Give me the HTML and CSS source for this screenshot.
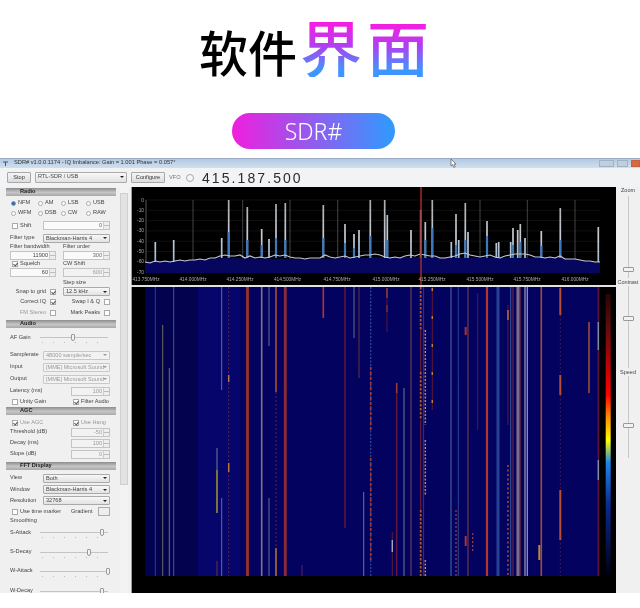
FILE: index.html
```html
<!DOCTYPE html>
<html lang="zh">
<head>
<meta charset="utf-8">
<title>软件界面</title>
<link rel="stylesheet" href="styles.css">
</head>
<body>
<header class="head">
  <h1 class="title"><span class="plain">软件</span><span class="grad">界面</span></h1>
  <div class="pill">SDR#</div>
</header>

<section class="window">
  <div class="titlebar">
    <svg class="appicon" viewBox="0 0 5 5"><path d="M0 1h5M2.500 1v4" stroke="#27618f" stroke-width="1"/></svg>
    <span class="wintitle">SDR# v1.0.0.1174 - IQ Imbalance: Gain = 1.001 Phase = 0.057°</span>
    <svg class="cursor" viewBox="0 0 7 9"><path d="M1 0v7l1.600-1.400 1.200 2.800 1.400-.6-1.200-2.600H6z" fill="#fff" stroke="#555" stroke-width=".7"/></svg>
    <div class="winbtns"><i class="wb wb1"></i><i class="wb wb2"></i><i class="wb wb3"></i></div>
  </div>
  <div class="toolbar">
    <button class="btn stop">Stop</button>
    <div class="select device">RTL-SDR / USB</div>
    <button class="btn configure">Configure</button>
    <span class="vfo">VFO</span>
    <span class="knob"></span>
    <span class="freq">415.187.500</span>
  </div>
  <div class="main">
    <aside class="side">
      <div class="panel">
        <div class="sec h8 mt1">Radio</div>
        <div class="rows">
          <div class="radios h10 mt2"><label><i class="rb on"></i>NFM</label><label><i class="rb"></i>AM</label><label><i class="rb"></i>LSB</label><label><i class="rb"></i>USB</label></div>
          <div class="radios h10"><label><i class="rb"></i>WFM</label><label><i class="rb"></i>DSB</label><label><i class="rb"></i>CW</label><label><i class="rb"></i>RAW</label></div>
          <div class="lc h15"><label class="chk"><i class="cb"></i>Shift</label><div class="num dim">0</div></div>
          <div class="lc h10"><span>Filter type</span><div class="select">Blackman-Harris 4</div></div>
          <div class="half h8"><span>Filter bandwidth</span><span>Filter order</span></div>
          <div class="half h9"><div class="num w46">11900</div><div class="num dim">300</div></div>
          <div class="half h8"><label class="chk"><i class="cb on"></i>Squelch</label><span>CW Shift</span></div>
          <div class="half h9"><div class="num w46">60</div><div class="num off">600</div></div>
          <div class="half h8 mt2"><span></span><span>Step size</span></div>
          <div class="half h9"><label class="chk rt">Snap to grid<i class="cb on"></i></label><div class="select">12.5 kHz</div></div>
          <div class="half h11"><label class="chk rt">Correct IQ<i class="cb on"></i></label><label class="chk rt wide">Swap I &amp; Q<i class="cb"></i></label></div>
          <div class="half h11"><label class="chk rt muted">FM Stereo<i class="cb"></i></label><label class="chk rt wide">Mark Peaks<i class="cb"></i></label></div>
        </div>
        <div class="sec h8 mt2">Audio</div>
        <div class="rows">
          <div class="sl h19"><span>AF Gain</span><div class="track"><i class="thumb" style="left:31px"></i></div></div>
          <div class="lc h12 mt2"><span>Samplerate</span><div class="select off">48000 sample/sec</div></div>
          <div class="lc h12"><span>Input</span><div class="select off">[MME] Microsoft Sound</div></div>
          <div class="lc h12"><span>Output</span><div class="select off">[MME] Microsoft Sound</div></div>
          <div class="lat h12"><span>Latency (ms)</span><div class="num off">100</div></div>
          <div class="lat h10"><label class="chk"><i class="cb"></i>Unity Gain</label><label class="chk"><i class="cb on"></i>Filter Audio</label></div>
        </div>
        <div class="sec h8">AGC</div>
        <div class="rows">
          <div class="lat h9 mt3 muted"><label class="chk"><i class="cb on"></i>Use AGC</label><label class="chk"><i class="cb on"></i>Use Hang</label></div>
          <div class="lat h10"><span>Threshold (dB)</span><div class="num off">-50</div></div>
          <div class="lat h12"><span>Decay (ms)</span><div class="num off">100</div></div>
          <div class="lat h10"><span>Slope (dB)</span><div class="num off">0</div></div>
        </div>
        <div class="sec h8 mt3">FFT Display</div>
        <div class="rows">
          <div class="lc h12 mt2"><span>View</span><div class="select">Both</div></div>
          <div class="lc h11"><span>Window</span><div class="select">Blackman-Harris 4</div></div>
          <div class="lc h11"><span>Resolution</span><div class="select">32768</div></div>
          <div class="lat h11"><label class="chk"><i class="cb"></i>Use time marker</label><div class="grad-row"><span>Gradient</span><i class="mini"></i></div></div>
          <div class="plainrow h7">Smoothing</div>
          <div class="sl h17"><span>S-Attack</span><div class="track"><i class="thumb" style="left:60px"></i></div></div>
          <div class="sl h22"><span>S-Decay</span><div class="track"><i class="thumb" style="left:47px"></i></div></div>
          <div class="sl h16"><span>W-Attack</span><div class="track"><i class="thumb" style="left:66px"></i></div></div>
          <div class="sl h24"><span>W-Decay</span><div class="track"><i class="thumb" style="left:60px"></i></div></div>
        </div>
      </div>
      <div class="scroll"><i class="scrollthumb"></i></div>
    </aside>

    <svg class="display" viewBox="131 187 485 406" preserveAspectRatio="none">
      <defs>
        <linearGradient id="spike" gradientUnits="userSpaceOnUse" x1="0" y1="200" x2="0" y2="262">
          <stop offset="0" stop-color="#a8acb0"/><stop offset=".6" stop-color="#c6ccd4"/><stop offset="1" stop-color="#9fb8d8"/>
        </linearGradient>
        <linearGradient id="scale" x1="0" y1="0" x2="0" y2="1">
          <stop offset="0" stop-color="#2a0505"/><stop offset=".12" stop-color="#600c0c"/><stop offset=".36" stop-color="#ff0000"/><stop offset=".43" stop-color="#ff8000"/><stop offset=".52" stop-color="#ffff00"/><stop offset=".6" stop-color="#1e86e8"/><stop offset=".75" stop-color="#0a2a90"/><stop offset="1" stop-color="#000010"/>
        </linearGradient>
      </defs>
      <rect x="131" y="187" width="485" height="406" fill="#000"/>
      <rect x="131" y="187" width="1" height="406" fill="#9a9a9a"/>

      <path d="M145 200H600M145 210.300H600M145 220.600H600M145 230.900H600M145 241.200H600M145 251.500H600M145 261.800H600" stroke="#181818" stroke-width=".7"/>
      <path d="M193 200V262M242.700 200V262M290 200V262M337.700 200V262M480 200V262M527.300 200V262M575 200V262" stroke="#444" stroke-width="1"/>
      <path d="M146 200V262" stroke="#555" stroke-width="1"/>
      <polygon fill="#06065e" points="145,262 180,261 220,258 300,259 400,257 500,258 560,258 600,263 600,273 145,273"/>

      <path fill="none" stroke="url(#spike)" stroke-width="1.700" d="M155.300 262V242M173.700 262V240M221.700 258V238M228.700 258V200M247.300 258V207M261.700 258V229M269 258V239M276 258V204M285.300 258V203M323.300 258V205M345 258V224M354 258V234M359 258V230M370.300 258V200M384.700 258V200M387.300 258V215M411 258V230M420.700 258V210M425.300 258V222M432.300 258V200M451.300 258V242M456 258V214M458.700 258V240M465.300 258V203M468 258V232M487 258V221M496.300 258V243M498.700 258V242M510.700 258V242M513 258V228M517.700 258V230M520.300 258V224M525 258V238M541.300 258V231M560.300 258V208M598.300 262V227"/>
      <path fill="none" stroke="#3f78bc" stroke-width="2.200" d="M228.700 258V232M247.300 258V240M261.700 258V245M276 258V238M285.300 258V240M323.300 258V238M345 258V243M354 258V248M370.300 258V236M387.300 258V240M425.300 258V240M432.300 258V228M456 258V245M465.300 258V240M487 258V236M513 258V245M520.300 258V242M541.300 258V246M560.300 258V240"/>
      <polyline fill="none" stroke="#c4c8d2" stroke-width="1.200" points="145,262 150,263 155,261 160,262 165,261 170,262 175,261 180,260 185,261 190,260 195,260 200,259 205,260 210,258 215,258 220,256 225,255 230,256 235,256 240,255 245,258 250,256 255,258 260,257 265,258 270,257 275,255 280,256 285,255 290,257 295,258 300,258 305,259 310,258 315,258 320,258 325,255 330,257 335,258 340,257 345,256 350,258 355,257 360,256 365,255 370,255 375,254 380,255 385,257 390,258 395,257 400,258 405,256 410,255 415,256 420,254 425,255 430,256 435,256 440,258 445,258 450,257 455,256 460,254 465,253 470,255 475,256 480,257 485,256 490,255 495,257 500,258 505,256 510,255 515,254 520,254 525,254 530,255 535,257 540,257 545,258 550,257 555,258 560,256 565,259 570,259 575,259 580,260 585,261 590,261 595,262 600,262"/>

      <path d="M421 187V285" stroke="#a12a2a" stroke-width="1.800" opacity=".85"/>

      <g class="axis">
        <text x="144" y="201.500" text-anchor="end">0</text><text x="144" y="211.800" text-anchor="end">-10</text><text x="144" y="222.100" text-anchor="end">-20</text><text x="144" y="232.400" text-anchor="end">-30</text><text x="144" y="242.700" text-anchor="end">-40</text><text x="144" y="253" text-anchor="end">-50</text><text x="144" y="263.300" text-anchor="end">-60</text><text x="144" y="273.600" text-anchor="end">-70</text>
        <text x="146" y="281" text-anchor="middle">413.750MHz</text><text x="193" y="281" text-anchor="middle">414.000MHz</text><text x="240" y="281" text-anchor="middle">414.250MHz</text><text x="287.500" y="281" text-anchor="middle">414.500MHz</text><text x="337" y="281" text-anchor="middle">414.750MHz</text><text x="386" y="281" text-anchor="middle">415.000MHz</text><text x="432" y="281" text-anchor="middle">415.250MHz</text><text x="480" y="281" text-anchor="middle">415.500MHz</text><text x="527" y="281" text-anchor="middle">415.750MHz</text><text x="575" y="281" text-anchor="middle">416.000MHz</text>
      </g>

      <rect x="131" y="285" width="485" height="2" fill="#e2e2e2"/>
      <rect x="145.300" y="287" width="454.700" height="289" fill="#03035f"/>
      <rect x="145.300" y="287" width="53" height="289" fill="#02024e"/>
      <rect x="198" y="287" width="42" height="289" fill="#05056c"/>

      <g fill="none" stroke-width="1" opacity=".85">
        <path stroke="#2b4d9c" d="M155.300 287V576M458.300 287V380"/>
        <path stroke="#7f7f64" d="M162.700 325V576"/>
        <path stroke="#8d8d4c" d="M169.300 368V576"/>
        <path stroke="#566a8e" d="M173.700 287V576"/>
        <path stroke="#76809a" d="M221.700 287V390M221.700 498V576M269 287V346M269 498V576M354 287V338"/>
        <path stroke="#8e8e9a" d="M217 448V470"/>
        <path stroke="#cdbc1f" stroke-width="1.400" d="M217 470V513"/>
        <path stroke="#7a3a3a" d="M217 561V576M359 287V378"/>
        <path stroke="#6d2a3e" stroke-dasharray="2 2" d="M228.700 287V576M276 392V548"/>
        <path stroke="#d88a30" stroke-width="1.500" d="M228.700 375V382M228.700 463V472M276 548V576"/>
        <path stroke="#b83a22" stroke-width="2.800" d="M247.500 287V576"/>
        <path stroke="#97868a" stroke-width="1.600" d="M261.700 287V576"/>
        <path stroke="#d0582a" stroke-width="1.600" d="M276 287V392"/>
        <path stroke="#a83232" stroke-width="2.800" d="M285.300 287V576"/>
        <path stroke="#d24020" stroke-width="1.600" d="M323.300 287V318"/>
        <path stroke="#781c34" stroke-width="1.400" d="M345 287V528M396.700 393V576"/>
        <path stroke="#3a5aa8" stroke-width="1.200" stroke-dasharray="2 1.500" d="M370.700 287V576"/>
        <path stroke="#c04428" stroke-width="1.600" stroke-dasharray="3 2" d="M370.700 367V430M370.700 458V560"/>
        <path stroke="#908878" d="M363.700 492V576"/>
        <path stroke="#6a2a60" d="M302 565V576"/>
        <path stroke="#b84a28" stroke-width="1.500" d="M387 288V298M387 305V312M396.700 383V393"/>
        <path stroke="#6a1c30" d="M387 298V332M432.300 287V410M477.700 293V430M508 305V425"/>
        <path stroke="#6d7888" stroke-width="1.200" d="M404 388V576"/>
        <path stroke="#7a4550" stroke-width="1.200" d="M411 287V576"/>
        <path stroke="#c8642c" stroke-width="1.800" stroke-dasharray="2.500 1.500" d="M420.700 287V330M420.700 372V420M420.700 510V576"/>
        <path stroke="#7a2034" stroke-width="1.200" d="M420.700 330V372M420.700 420V510M423.500 287V576"/>
        <path stroke="#d8a040" stroke-width="1.500" stroke-dasharray="2 1.500" d="M425.300 330V425M425.300 440V495M425.300 560V576"/>
        <path stroke="#d8923a" stroke-width="1.500" stroke-dasharray="3 25" d="M432.300 288V410"/>
        <path stroke="#4a6c9e" stroke-width="1.200" d="M451 287V576"/>
        <path stroke="#34509c" d="M458.300 380V576"/>
        <path stroke="#c24a3a" stroke-width="1.200" stroke-dasharray="2 2" d="M456 510V576M472.700 533V553"/>
        <path stroke="#7c4648" stroke-width="1.200" d="M468 287V576"/>
        <path stroke="#c83c2c" stroke-width="2" d="M465.700 536V546M465.700 327V335"/>
        <path stroke="#cc4222" stroke-width="2.200" d="M487 287V576"/>
        <path stroke="#2e4e9e" stroke-width="3" d="M498 287V576"/>
        <path stroke="#d0783c" stroke-width="1.600" d="M508 310V320"/>
        <path stroke="#c45a34" stroke-width="1.500" stroke-dasharray="2 2.500" d="M508 465V576"/>
        <path stroke="#3a5aa8" stroke-width="1.200" d="M510.700 287V576"/>
        <path stroke="#7a2a40" stroke-width="1.200" d="M513 287V576"/>
        <path stroke="#8f7f8e" stroke-width="3.200" d="M518 287V576"/>
        <path stroke="#bc3c34" d="M520 287V576"/>
        <path stroke="#b4bac4" stroke-width="1.200" d="M525 287V576M527.300 287V576"/>
        <path stroke="#c4582a" stroke-width="1.600" d="M541.300 287V576"/>
        <path stroke="#7a1e30" stroke-dasharray="1.500 2.500" d="M560.300 287V576"/>
        <path stroke="#d85c28" stroke-width="2" d="M560.300 288V315M560.300 375V395M560.300 490V540"/>
        <path stroke="#b45a34" stroke-width="1.600" d="M589 322V393"/>
        <path stroke="#7a1e30" stroke-width="1.200" d="M598.300 287V576"/>
        <path stroke="#9aa2ac" stroke-width="1.400" d="M598.300 322V350M598.300 460V480"/>
        <path stroke="#6a2438" d="M392.300 532V576"/>
        <path stroke="#c8c0d0" stroke-width="1.400" d="M392.300 540V552"/>
        <path stroke="#d8a038" stroke-width="2" d="M539.300 545V560"/>
      </g>
      <rect x="605.700" y="294" width="5" height="281" fill="url(#scale)"/>
    </svg>

    <aside class="rail">
      <div class="rail-label first">Zoom</div>
      <div class="vtrack t1"><i class="vthumb"></i></div>
      <div class="rail-label">Contrast</div>
      <div class="vtrack t2"><i class="vthumb"></i></div>
      <div class="rail-label">Speed</div>
      <div class="vtrack t3"><i class="vthumb"></i></div>
    </aside>
  </div>
</section>
</body>
</html>
```

FILE: styles.css
```css
* { box-sizing: border-box; }
html, body { margin: 0; padding: 0; background: #fff; }
body { width: 640px; height: 608px; overflow: hidden; font-family: "Noto Sans CJK SC", "Noto Sans", sans-serif; }

.head { height: 158px; padding-top: 9px; filter: blur(.3px); }
.title { margin: 0 0 0 199px; height: 68px; font-weight: 400; white-space: nowrap; display: flex; align-items: flex-end; line-height: 1; }
.plain { font-size: 49px; color: #000; padding-bottom: 2px; margin-right: 3px; font-weight: 500; }
.grad { font-size: 62px; font-weight: 500; letter-spacing: 5px; background: linear-gradient(180deg, #f51ee0 15%, #b13ff0 50%, #3f95ff 88%); -webkit-background-clip: text; background-clip: text; color: transparent; }
.pill { margin: 36px 0 0 232px; width: 163px; height: 36px; border-radius: 18px; background: linear-gradient(90deg, #f01fdd, #2f9bff); color: #fff; font: 300 23px/36px "Noto Sans", sans-serif; text-align: center; }

.window { height: 435px; width: 640px; display: flex; flex-direction: column; font: 5.600px/1 "Liberation Sans", sans-serif; color: #444; background: #f0f0f0; filter: blur(.6px); overflow: hidden; }

.titlebar { height: 10px; flex: none; display: flex; align-items: center; background: linear-gradient(180deg, #8d9fb6 0, #b5cbe2 15%, #cfdfee 100%); padding-left: 3px; position: relative; }
.appicon { width: 5px; height: 5px; margin-right: 6px; }
.wintitle { font-size: 5.700px; color: #333; }
.cursor { position: absolute; left: 450px; top: 1px; width: 7px; height: 9px; }
.winbtns { margin-left: auto; display: flex; gap: 3px; }
.wb { display: block; height: 7px; border: 1px solid #9fb2c6; background: #c0cfde; }
.wb1 { width: 15px; }
.wb2 { width: 11px; }
.wb3 { width: 9px; background: #d8693c; border-color: #c86040; }

.toolbar { height: 19px; flex: none; display: flex; align-items: center; background: #f1f3f4; padding-left: 7px; }
.btn { font: 5.600px/1 "Liberation Sans", sans-serif; color: #333; height: 11px; padding: 0; border: 1px solid #a8a8a8; border-radius: 1px; background: linear-gradient(#f6f6f6, #dcdcdc); }
.stop { width: 24px; }
.configure { width: 34px; margin-left: 4px; }
.device { width: 92px; height: 11px !important; margin-left: 4px; line-height: 9px; }
.vfo { margin-left: 4px; color: #777; width: 12px; }
.knob { width: 8px; height: 8px; border-radius: 50%; border: 1px solid #aaa; margin-left: 5px; background: #f6f6f6; }
.freq { margin-left: 8px; font: 400 14px/1 "Liberation Sans", sans-serif; letter-spacing: 2.080px; color: #2b2b2b; }

.main { flex: 1; display: flex; min-height: 0; }
.side { width: 131px; flex: none; display: flex; overflow: hidden; }
.panel { width: 120px; padding-left: 6px; flex: none; height: 416px; }
.sec { width: 110px; background: linear-gradient(180deg, #8d8d8d, #c6c6c6 55%, #a8a8a8); padding-left: 14px; font-weight: 700; color: #222; display: flex; align-items: center; }
.rows { padding-left: 4px; width: 104px; }
.rows > * { display: grid; align-items: center; width: 100px; }
.h7 { height: 7px; } .h8 { height: 8px; } .h9 { height: 9px; } .h10 { height: 10px; } .h11 { height: 11px; } .h12 { height: 12px; }
.h15 { height: 15px; } .h16 { height: 16px; } .h17 { height: 17px; } .h19 { height: 19px; } .h22 { height: 22px; } .h24 { height: 24px; }
.mt1 { margin-top: 1px; } .mt2 { margin-top: 2px; } .mt3 { margin-top: 3px; }
.radios { grid-template-columns: 27px 23px 25px 25px; }
.radios label { display: flex; align-items: center; gap: 2px; }
.lc { grid-template-columns: 33px 67px; }
.half { grid-template-columns: 53px 47px; }
.lat { grid-template-columns: 61px 39px; }
.sl { grid-template-columns: 30px 68px; }
.plainrow { display: block !important; line-height: 7px; }

.rb { width: 5px; height: 5px; border-radius: 50%; border: 1px solid #aaa; background: #fff; display: block; margin-left: 1px; flex: none; }
.rb.on { background: #2f6cae; border-color: #7f9fc0; }
.chk { display: flex; align-items: center; gap: 2px; }
.cb { width: 6px; height: 6px; border: 1px solid #aaa; background: #fff; display: block; flex: none; position: relative; margin-left: 2px; }
.cb.on::after { content: ""; position: absolute; left: 1px; top: 0; width: 2px; height: 3px; border: solid #556; border-width: 0 1px 1px 0; transform: rotate(40deg); }
.rt { justify-content: flex-end; width: 46px; }
.wide { width: 47px; }
.muted { color: #999; }

.num, .select { height: 9px; border: 1px solid #c4c4c4; background: #fafafa; line-height: 7px; position: relative; white-space: nowrap; overflow: hidden; }
.num { text-align: right; padding-right: 7px; }
.num::after { content: ""; position: absolute; right: 0; top: 0; bottom: 0; width: 5px; border-left: 1px solid #ccc; background: linear-gradient(#eee 45%, #bbb 50%, #eee 55%); }
.w46 { width: 46px; }
.dim { color: #666; }
.off { color: #9a9a9a; background: #f2f2f2; }
.select { padding-left: 2px; background: linear-gradient(#f8f8f8, #e2e2e2); border-color: #aaa; border-radius: 1px; }
.select::after { content: ""; position: absolute; right: 2px; top: 2.500px; border: 2px solid transparent; border-top: 2.500px solid #222; border-bottom: 0; }
.select.off { background: #f2f2f2; border-color: #c8c8c8; }
.select.off::after { border-top-color: #999; }

.track { height: 1px; background: #c4c4c4; position: relative; }
.track::after { content: ""; position: absolute; left: 2px; right: 2px; top: 5px; height: 1px; background: repeating-linear-gradient(90deg, #bbb 0 1px, transparent 1px 11px); }
.thumb { position: absolute; top: -3px; width: 4px; height: 7px; background: #f4f4f4; border: 1px solid #9a9a9a; border-radius: 1px 1px 2px 2px; }
.grad-row { display: flex; align-items: center; justify-content: space-between; }
.mini { display: block; width: 12px; height: 9px; border: 1px solid #aaa; background: #eee; }

.scroll { width: 8px; height: 406px; background: #f3f3f3; position: relative; }
.scrollthumb { position: absolute; left: 0; right: 0; top: 6px; height: 292px; background: #e2e2e2; border: 1px solid #cfcfcf; }

.display { width: 485px; height: 406px; flex: none; display: block; }
.axis { font: 4.800px "Liberation Sans", sans-serif; fill: #a9a9a9; }

.rail { flex: 1; display: flex; flex-direction: column; align-items: center; background: #f0f0f0; color: #444; font-size: 5.500px; }
.rail-label { height: 8px; line-height: 8px; white-space: nowrap; }
.rail-label.first { margin-top: -1px; }
.vtrack { width: 1px; background: #c8c8c8; position: relative; }
.t1 { height: 82px; margin-top: 2px; }
.t2 { height: 82px; }
.t3 { height: 82px; }
.vthumb { position: absolute; left: -5px; width: 11px; height: 5px; background: #f2f2f2; border: 1px solid #999; border-radius: 1px; }
.t1 .vthumb { top: 71px; }
.t2 .vthumb { top: 30px; }
.t3 .vthumb { top: 47px; }
```
